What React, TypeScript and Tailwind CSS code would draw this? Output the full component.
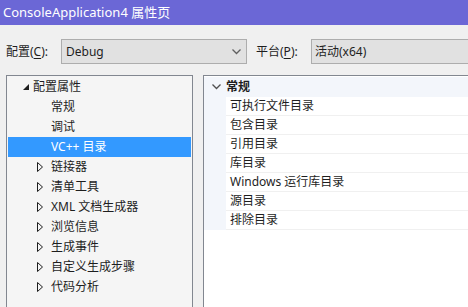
import React from "react";

const FONT = { fontFamily: '"Noto Sans", "Noto Sans CJK SC", sans-serif' };

function Expanded() {
  return (
    <svg width="6" height="6" viewBox="0 0 6 6" className="block">
      <polygon points="6,0 6,6 0,6" fill="#1e1e1e" />
    </svg>
  );
}

function Collapsed() {
  return (
    <svg width="6" height="10" viewBox="0 0 6 10" className="block">
      <polygon points="0.5,0.5 5.5,5 0.5,9.5" fill="none" stroke="#1e1e1e" strokeWidth="1" />
    </svg>
  );
}

function Chevron({ color = "#606060" }: { color?: string }) {
  return (
    <svg width="9" height="6" viewBox="0 0 9 6" className="block">
      <polyline points="0.5,0.5 4.5,4.5 8.5,0.5" fill="none" stroke={color} strokeWidth="1.3" />
    </svg>
  );
}

const treeChildren: { label: string; kind: "leaf" | "sel" | "col" }[] = [
  { label: "常规", kind: "leaf" },
  { label: "调试", kind: "leaf" },
  { label: "VC++ 目录", kind: "sel" },
  { label: "链接器", kind: "col" },
  { label: "清单工具", kind: "col" },
  { label: "XML 文档生成器", kind: "col" },
  { label: "浏览信息", kind: "col" },
  { label: "生成事件", kind: "col" },
  { label: "自定义生成步骤", kind: "col" },
  { label: "代码分析", kind: "col" },
];

const props = [
  "可执行文件目录",
  "包含目录",
  "引用目录",
  "库目录",
  "Windows 运行库目录",
  "源目录",
  "排除目录",
];

export default function App() {
  return (
    <div
      className="w-[468px] h-[307px] overflow-hidden bg-[#f0f0f0] text-[12px] text-[#1e1e1e] flex flex-col"
      style={FONT}
    >
      <div className="h-[25px] shrink-0 bg-[#6b67d6] text-white text-[13px] pl-[3px] flex items-center">
        ConsoleApplication4 属性页
      </div>

      <div className="h-[50px] shrink-0 flex items-start pt-[14px]">
        <div className="w-[61px] pl-[6px] h-[25px] flex items-center shrink-0">
          配置(<span className="underline underline-offset-2">C</span>):
        </div>
        <div className="w-[186px] h-[25px] shrink-0 border border-[#adadad] bg-[#e1e1e1] flex items-center pl-[4px] pr-[5px]">
          <span className="flex-1">Debug</span>
          <Chevron />
        </div>
        <div className="w-[64px] pl-[9px] h-[25px] flex items-center shrink-0">
          平台(<span className="underline underline-offset-2">P</span>):
        </div>
        <div className="w-[180px] h-[25px] shrink-0 border border-[#adadad] bg-[#e1e1e1] flex items-center pl-[3px]">
          活动(x64)
        </div>
      </div>

      <div className="flex-1 flex pl-[6px] min-h-0">
        <div className="w-[187px] shrink-0 h-[260px] border border-[#828790] bg-[#f5f5f5] pt-[1px]">
          <div className="h-[20px] flex items-center">
            <div className="w-[16px] shrink-0" />
            <div className="w-[10px] shrink-0 flex justify-start">
              <Expanded />
            </div>
            <span>配置属性</span>
          </div>
          {treeChildren.map((c) => (
            <div
              key={c.label}
              className={
                "h-[20px] flex items-center mx-[1px] " +
                (c.kind === "sel" ? "bg-[#3399ff] text-white" : "")
              }
            >
              <div className="w-[29px] shrink-0" />
              <div className="w-[14px] shrink-0">{c.kind === "col" ? <Collapsed /> : null}</div>
              <span>{c.label}</span>
            </div>
          ))}
        </div>

        <div className="w-[10px] shrink-0" />

        <div className="flex-1 h-[260px] border-l border-t border-[#828790] bg-white pt-[1px]">
          <div className="h-[20px] flex items-center bg-[#f3f6fb]">
            <div className="w-[22px] shrink-0 flex justify-center pl-[3px]">
              <Chevron color="#505050" />
            </div>
            <span className="font-bold">常规</span>
          </div>
          {props.map((p) => (
            <div key={p} className="h-[19px] flex">
              <div className="w-[22px] shrink-0 bg-[#f3f6fb]" />
              <div className="flex-1 flex items-center border-b border-[#f0f0f0] bg-white pl-[4px]">
                {p}
              </div>
            </div>
          ))}
        </div>
      </div>
    </div>
  );
}
